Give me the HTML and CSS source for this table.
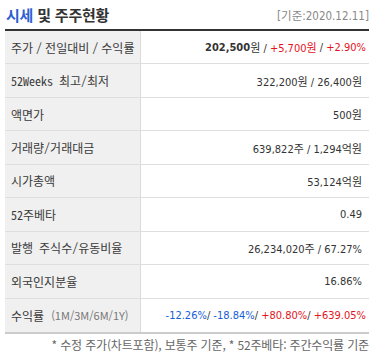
FILE: index.html
```html
<!DOCTYPE html>
<html lang="ko">
<head>
<meta charset="utf-8">
<title>시세 및 주주현황</title>
<link rel="stylesheet" href="styles.css">
</head>
<body>
<div class="wrap">
  <div class="head">
    <h3 class="title"><span class="hl">시세</span> 및 주주현황</h3>
    <span class="date">[기준:2020.12.11]</span>
  </div>
  <div class="tbl">
    <div class="row">
      <div class="th">주가<span class="sl">/</span>전일대비<span class="sl">/</span>수익률</div>
      <div class="td edge"><b>202,500</b>원 /&nbsp;<span class="up">+5,700원</span>&nbsp;/&nbsp;<span class="up">+2.90%</span></div>
    </div>
    <div class="row">
      <div class="th">52Weeks 최고/최저</div>
      <div class="td">322,200원 / 26,400원</div>
    </div>
    <div class="row">
      <div class="th">액면가</div>
      <div class="td">500원</div>
    </div>
    <div class="row">
      <div class="th">거래량/거래대금</div>
      <div class="td">639,822주 / 1,294억원</div>
    </div>
    <div class="row">
      <div class="th">시가총액</div>
      <div class="td">53,124억원</div>
    </div>
    <div class="row">
      <div class="th">52주베타</div>
      <div class="td">0.49</div>
    </div>
    <div class="row">
      <div class="th">발행 주식수/유동비율</div>
      <div class="td">26,234,020주 / 67.27%</div>
    </div>
    <div class="row">
      <div class="th">외국인지분율</div>
      <div class="td">16.86%</div>
    </div>
    <div class="row">
      <div class="th">수익률 <span class="sub">(1M/3M/6M/1Y)</span></div>
      <div class="td edge"><span class="down">-12.26%</span>/&nbsp;<span class="down">-18.84%</span>/&nbsp;<span class="up">+80.80%</span>/&nbsp;<span class="up">+639.05%</span></div>
    </div>
  </div>
  <p class="note">* 수정 주가(차트포함), 보통주 기준, * 52주베타: 주간수익률 기준</p>
</div>
</body>
</html>
```

FILE: styles.css
```css
body {
  margin: 0;
  background: #fff;
}

.wrap {
  margin-left: 5px;
  width: 364px;
}

.head {
  display: flex;
  justify-content: space-between;
  align-items: center;
  height: 29px;
  border-bottom: 2px solid #333;
}

.title {
  margin: 0;
  padding-left: 1px;
  font: bold 15px "Noto Sans CJK KR", sans-serif;
  color: #333;
  letter-spacing: -0.2px;
}

.hl {
  color: #2d5fd5;
}

.date {
  font: 11.5px "DejaVu Sans Condensed", "Noto Sans CJK KR", sans-serif;
  color: #888;
}

.tbl {
  border-bottom: 2px solid #ccc;
}

.row {
  display: flex;
  height: 33.44px;
  box-sizing: border-box;
  border-bottom: 1px solid #dedede;
}

.row:last-child {
  border-bottom: 0;
}

.th {
  width: 136px;
  flex: none;
  box-sizing: border-box;
  display: flex;
  align-items: center;
  padding-left: 6px;
  background: #f0f0f0;
  border-right: 1px solid #dadada;
  font: 12px "Noto Sans Mono CJK KR", "Noto Sans CJK KR", sans-serif;
  color: #3a3a3a;
  white-space: pre;
}

.sl {
  margin: 0 3px;
}

.sub {
  margin-left: 1px;
  font: 11px "Noto Sans CJK KR", sans-serif;
  color: #777;
}

.td {
  flex: 1;
  display: flex;
  align-items: center;
  justify-content: flex-end;
  padding-right: 7px;
  font: 11px "DejaVu Sans Condensed", "Noto Sans CJK KR", sans-serif;
  color: #333;
  white-space: pre;
}

.td.edge {
  padding-right: 3px;
}

.td b {
  font-weight: bold;
}

.up {
  color: #e3141c;
}

.down {
  color: #1560d6;
}

.note {
  margin: 0;
  padding-top: 2px;
  line-height: 16px;
  text-align: right;
  font: 12px "Noto Sans CJK KR", sans-serif;
  letter-spacing: -0.15px;
  color: #666;
  white-space: nowrap;
}
```
